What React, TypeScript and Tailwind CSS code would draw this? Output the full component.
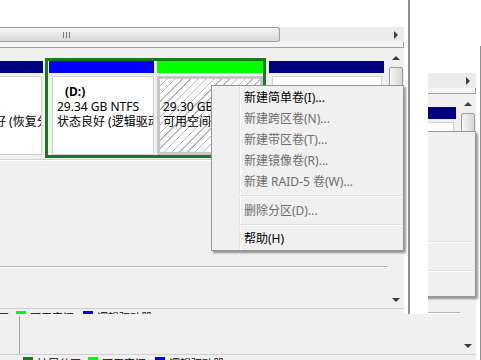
import React from "react";

type MenuEntry = { label: string; enabled?: boolean } | "sep";

const menuItems: MenuEntry[] = [
  { label: "新建简单卷(I)...", enabled: true },
  { label: "新建跨区卷(N)..." },
  { label: "新建带区卷(T)..." },
  { label: "新建镜像卷(R)..." },
  { label: "新建 RAID-5 卷(W)..." },
  "sep",
  { label: "删除分区(D)..." },
  "sep",
  { label: "帮助(H)", enabled: true },
];

function UpArrow() {
  return <div className="h-0 w-0 border-x-[4px] border-b-[4px] border-x-transparent border-b-[#3c3c3c]" />;
}

function DownArrow() {
  return <div className="h-0 w-0 border-x-[4px] border-t-[4px] border-x-transparent border-t-[#3c3c3c]" />;
}

function RightArrow() {
  return <div className="h-0 w-0 border-y-[4px] border-l-[4px] border-y-transparent border-l-[#3c3c3c]" />;
}

function Part({
  bar,
  className = "",
  bodyClass = "",
  children,
}: {
  bar: string;
  className?: string;
  bodyClass?: string;
  children?: React.ReactNode;
}) {
  return (
    <div className={`flex flex-col ${className}`}>
      <div className={`h-[12px] ${bar}`} />
      <div className={`mt-[3px] flex-1 overflow-hidden whitespace-nowrap leading-[15px] ${bodyClass}`}>
        {children}
      </div>
    </div>
  );
}

function LegendItem({ color, label, className = "" }: { color: string; label: string; className?: string }) {
  return (
    <div className={`flex items-start ${className}`}>
      <div className={`h-[10px] w-[10px] ${color}`} />
      <span className="ml-[4px] mt-px">{label}</span>
    </div>
  );
}

function ContextMenu() {
  return (
    <div className="absolute left-[291px] top-[85px] w-[193px] border border-[#979797] bg-[#f0f0f0] bg-[linear-gradient(to_right,transparent_27px,#e2e3e3_27px,#e2e3e3_28px,#ffffff_28px,#ffffff_29px,transparent_29px)] py-px shadow-[2px_2px_2px_rgba(0,0,0,0.4)]">
      {menuItems.map((item, i) =>
        item === "sep" ? (
          <div key={i} className={`flex items-center ${i === 5 ? "h-[8px]" : "h-[7px]"}`}>
            <div className="ml-[27px] mr-px flex-1 border-t border-b border-t-[#e0e0e0] border-b-white" />
          </div>
        ) : (
          <div
            key={i}
            className={`flex h-[21px] items-center whitespace-nowrap pl-[32px] leading-none ${
              item.enabled ? "text-black" : "text-[#6d6d6d]"
            }`}
          >
            {item.label}
          </div>
        )
      )}
    </div>
  );
}

function DiskWindow() {
  return (
    <div className="flex h-[330px] w-[508px] bg-white">
      <div className="relative flex w-[484px] flex-col">
        <div className="h-[27px] bg-white" />

        {/* horizontal scrollbar of the volume list */}
        <div className="flex h-[15px] bg-[#ebebeb]">
          <div className="flex w-[360px] items-center rounded-r-[3px] border border-l-0 border-[#9e9e9e] bg-gradient-to-b from-[#f6f6f6] to-[#d8d8d8] pl-[143px]">
            <div className="flex h-[6px] gap-[2px]">
              <div className="w-px bg-[#7a7a7a]" />
              <div className="w-px bg-[#7a7a7a]" />
              <div className="w-px bg-[#7a7a7a]" />
            </div>
          </div>
          <div className="flex-1" />
          <div className="flex w-[16px] items-center justify-center">
            <RightArrow />
          </div>
        </div>
        <div className="h-[6px] border-b border-r border-[#a0a0a0] bg-[#f4f4f4]" />

        {/* graphical disk view */}
        <div className="flex h-[260px] bg-[#f0f0f0]">
          <div className="flex w-[468px] flex-col">
            <div className="h-[10px]" />
            <div className="flex h-[100px]">
              <div className="w-[28px] border-r border-[#a0a0a0]" />
              <div className="w-[2px]" />
              <Part
                bar="bg-[#000080]"
                className="mt-[3px] h-[94px] w-[93px]"
                bodyClass="mr-px border border-[#d0d0d0] bg-white pl-[7px] pt-[7px]"
              >
                <div className="h-[15px]" />
                <div>100 MB</div>
                <div>状态良好 (恢复分区)</div>
              </Part>
              <div className="w-[2px]" />
              <div className="flex w-[221px] border-[3px] border-[#1b7a1b]">
                <Part
                  bar="bg-[#0000ff]"
                  className="ml-px w-[105px]"
                  bodyClass="ml-[3px] border border-[#d0d0d0] bg-white pl-[4px] pt-[7px]"
                >
                  <div className="pl-[8px] font-bold">(D:)</div>
                  <div>29.34 GB NTFS</div>
                  <div>状态良好 (逻辑驱动器)</div>
                </Part>
                <div className="w-[3px]" />
                <Part
                  bar="bg-[#00ff00]"
                  className="w-[106px]"
                  bodyClass="border-[3px] border-[#c6c6c6] bg-[repeating-linear-gradient(135deg,#ffffff_0px,#ffffff_4.5px,#b8b8b8_4.5px,#b8b8b8_5.5px)] pl-[3px] pt-[5px]"
                >
                  <div className="h-[15px]" />
                  <div>29.30 GB</div>
                  <div>可用空间</div>
                </Part>
              </div>
              <div className="w-[3px]" />
              <Part
                bar="bg-[#000080]"
                className="mt-[3px] h-[94px] w-[115px]"
                bodyClass="ml-[3px] mr-[2px] border border-[#d0d0d0] bg-white"
              />
            </div>
            <div className="mt-px h-px bg-[#d4d4d4]" />
            <div className="h-px bg-white" />
            <div className="h-[105px]" />
            <div className="h-px bg-[#b4b4b4]" />
            <div className="h-px bg-white" />
            <div className="flex h-[40px]">
              <div className="mt-[2px] w-[28px] border-r border-[#a0a0a0]" />
            </div>
          </div>

          {/* vertical scrollbar */}
          <div className="flex w-[16px] flex-col items-center bg-[#f0f0f0] pt-[2px]">
            <div className="flex h-[16px] w-full items-center justify-center">
              <UpArrow />
            </div>
            <div className="mt-px h-[53px] w-[14px] rounded-[2px] border border-[#9a9a9a] bg-gradient-to-r from-[#f6f6f6] to-[#d6d6d6]" />
            <div className="flex-1" />
            <div className="flex h-[16px] w-full items-center justify-center">
              <DownArrow />
            </div>
          </div>
        </div>

        {/* legend */}
        <div className="flex h-[22px] items-start border-t border-[#d0d0d0] bg-[#f0f0f0] pl-[31px] pt-[2px] text-[11px] leading-[12px]">
          <LegendItem color="bg-[#1b7a1b]" label="扩展分区" className="w-[65px]" />
          <LegendItem color="bg-[#00ff00]" label="可用空间" className="w-[67px]" />
          <LegendItem color="bg-[#0000ff]" label="逻辑驱动器" />
        </div>

        <ContextMenu />
      </div>
      <div className="w-[4px] bg-white" />
      <div className="w-[2px] bg-[#8f8f8f]" />
      <div className="w-[18px] bg-white" />
    </div>
  );
}

export default function App() {
  return (
    <div className="relative h-[360px] w-[481px] overflow-hidden bg-white font-['Noto_Sans','Noto_Sans_CJK_SC',sans-serif] text-[12px] text-black">
      {/* window behind, shifted */}
      <div className="absolute left-[-8px] top-[46px]">
        <DiskWindow />
      </div>
      {/* window in front */}
      <div className="absolute left-0 top-0 h-[314px] w-[428px] overflow-hidden">
        <div className="absolute left-[-80px] top-0">
          <DiskWindow />
        </div>
      </div>
    </div>
  );
}
